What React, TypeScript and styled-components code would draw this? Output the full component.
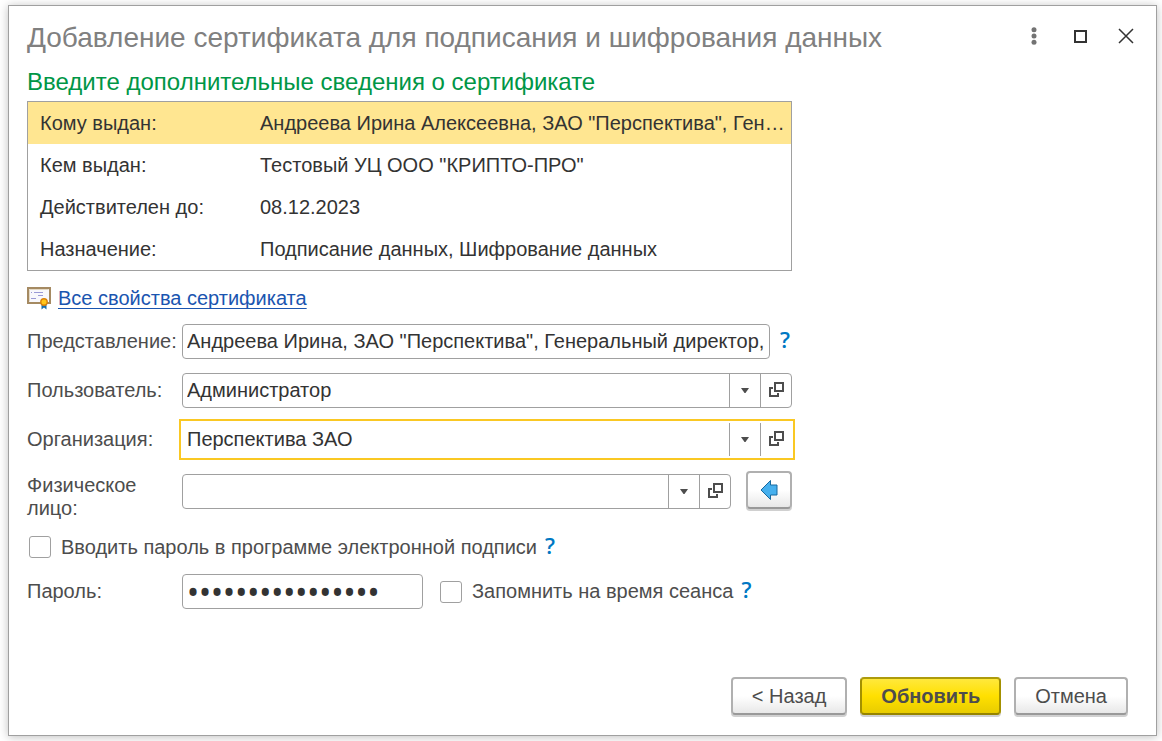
import React, { useState } from "react";
import styled, { createGlobalStyle, css } from "styled-components";

const GlobalStyle = createGlobalStyle`
  *, *::before, *::after { box-sizing: border-box; }
  body {
    margin: 0;
    background: #fff;
    color: #333;
    font-family: "Liberation Sans", Arial, sans-serif;
    font-size: 20px;
    line-height: 23px;
  }
  input, button { font: inherit; color: inherit; }
`;

const Page = styled.div`
  display: flex;
  min-height: 100vh;
  padding: 5px 5px 5px 8px;
`;

const Dialog = styled.main`
  flex: 1;
  display: flex;
  flex-direction: column;
  min-width: 0;
  padding: 14px 28px 20px 18px;
  border: 1px solid #a0a0a0;
  background: #fff;
  box-shadow: 0 1px 9px rgba(0, 0, 0, 0.25);
`;

const TitleBar = styled.header`
  display: flex;
  align-items: flex-start;
  justify-content: space-between;
  height: 36px;
`;

const Title = styled.h1`
  margin: 0;
  color: #808080;
  font-size: 28px;
  font-weight: 400;
  line-height: 36px;
`;

const WindowTools = styled.div`
  display: flex;
  gap: 22px;
  margin: 4px -10px 0 0;
`;

const ToolButton = styled.button`
  display: grid;
  place-items: center;
  width: 24px;
  height: 24px;
  padding: 0;
  border: 0;
  background: none;
`;

const Subtitle = styled.h2`
  margin: 12px 0 5px;
  color: #009646;
  font-size: 24px;
  font-weight: 400;
  line-height: 28px;
`;

const Form = styled.form`
  flex: 1;
  display: flex;
  flex-direction: column;
`;

const Content = styled.div`
  width: 100%;
  max-width: 765px;
`;

const Details = styled.table`
  width: 100%;
  table-layout: fixed;
  border: 1px solid #a0a0a0;
  border-spacing: 0;
`;

const DetailRow = styled.tr<{ $selected?: boolean }>`
  height: 42px;
  background: ${(p) => (p.$selected ? "#ffe691" : "#fff")};
`;

const DetailLabel = styled.th`
  width: 220px;
  padding: 0 0 0 12px;
  font-weight: 400;
  text-align: left;
`;

const DetailValue = styled.td`
  padding: 0 4px 0 12px;
  overflow: hidden;
  text-overflow: ellipsis;
  white-space: nowrap;
`;

const LinkRow = styled.div`
  display: flex;
  align-items: center;
  gap: 7px;
  margin: 15px 0 14px;
`;

const Link = styled.a`
  color: #1a55b0;
  text-decoration: underline;
  text-decoration-thickness: 1px;
  text-decoration-skip-ink: none;
  text-underline-offset: 3px;
`;

const Fields = styled.div`
  display: flex;
  flex-direction: column;
  gap: 14px;
`;

const FieldRow = styled.div<{ $top?: boolean }>`
  display: flex;
  align-items: ${(p) => (p.$top ? "flex-start" : "center")};
  padding-top: ${(p) => (p.$top ? "3px" : "0")};
`;

const FieldLabel = styled.label`
  flex: none;
  width: 155px;
  color: #4d4d4d;
`;

const Box = styled.div<{ $focused?: boolean; $width?: string }>`
  flex: ${(p) => (p.$width ? `0 1 ${p.$width}` : "1")};
  display: flex;
  min-width: 0;
  height: 35px;
  border: 1px solid #a0a0a0;
  border-radius: 4px;
  background: #fff;
  overflow: hidden;
  ${(p) =>
    p.$focused &&
    css`
      border-color: transparent;
      border-radius: 0;
      outline: 2px solid #fac823;
      outline-offset: 1px;
    `}
`;

const TextInput = styled.input`
  flex: 1;
  min-width: 0;
  padding: 0 4px;
  border: 0;
  outline: 0;
  background: none;
`;

const PasswordInput = styled(TextInput)`
  font-family: "Noto Sans", sans-serif;
  font-size: 32px;
`;

const InnerButton = styled.button`
  display: grid;
  place-items: center;
  flex: none;
  width: 31px;
  padding: 0;
  border: 0;
  border-left: 1px solid #a0a0a0;
  background: none;
`;

const Help = styled.button`
  flex: none;
  padding: 0 0 4px;
  border: 0;
  background: none;
  color: #0078c3;
  font-family: "Open Sans", sans-serif;
  font-size: 22px;
  font-weight: 600;
  line-height: 23px;
`;

const FieldHelp = styled(Help)`
  width: 22px;
  padding-left: 8px;
`;

const CheckLabel = styled.label`
  display: flex;
  align-items: center;
  gap: 10px;
  margin-right: 8px;
  color: #4d4d4d;
`;

const CheckBox = styled.input`
  appearance: none;
  width: 22px;
  height: 22px;
  margin: 0;
  border: 1px solid #a0a0a0;
  border-radius: 3px;
  background: #fff;
  &:checked { background: #ffe691; }
`;

const CheckRow = styled.div`
  display: flex;
  align-items: center;
  height: 26px;
  padding-left: 2px;
`;

const SessionCheck = styled(CheckLabel)`
  margin-left: 17px;
`;

const Button = styled.button<{ $primary?: boolean }>`
  height: 38px;
  padding: 0 19px;
  border: 2px solid;
  border-color: #b0b0b0 #b0b0b0 #999;
  border-radius: 4px;
  background: linear-gradient(#fff 50%, #e8e8e8);
  box-shadow: 0 2px 0 #d0d0d0;
  color: #4d4d4d;
  ${(p) =>
    p.$primary &&
    css`
      border-color: #ad9b0c #a39000 #958300;
      background: linear-gradient(#ffe83c, #ffe000 50%, #e8cc00);
      font-weight: 700;
    `}
`;

const PickButton = styled(Button)`
  display: grid;
  place-items: center;
  flex: none;
  width: 46px;
  padding: 0;
  margin: -3px 0 0 15px;
`;

const Footer = styled.footer`
  display: flex;
  justify-content: flex-end;
  gap: 13px;
  margin-top: auto;
  padding-top: 24px;
`;

const CertificateIcon = () => (
  <svg width="24" height="24" viewBox="0 0 24 24" aria-hidden="true">
    <rect x="1" y="2" width="22" height="15" fill="#f8f8fc" stroke="#a58a62" strokeWidth="2" />
    <path d="M2.500 15.500V3.500H21.500" fill="none" stroke="#e4d9c5" />
    <path d="M4 6.500h1M7 6.500h9M11 9.500h5M4 12.500h5" stroke="#9a9ad6" />
    <path d="M14.500 17h5v6.500l-2.500-2-2.500 2z" fill="#176eae" />
    <circle cx="17" cy="16" r="3.200" fill="#ffc61a" stroke="#da8208" strokeWidth="1.400" />
  </svg>
);

const ArrowDown = () => (
  <svg width="8" height="5" viewBox="0 0 8 5" aria-hidden="true">
    <path d="M0 0h8L4.500 5h-1z" fill="#4d4d4d" />
  </svg>
);

const OpenIcon = () => (
  <svg width="16" height="17" viewBox="0 0 16 17" fill="none" stroke="#4d4d4d" strokeWidth="2" aria-hidden="true">
    <rect x="7" y="1" width="8" height="8" />
    <path d="M5 6H2v8h8v-3" />
  </svg>
);

const BlueArrow = () => (
  <svg width="18" height="22" viewBox="0 0 18 22" aria-hidden="true">
    <path d="M1 11L10.500 1.500V6H17v10h-6.500v4.500z" fill="#46b0ee" stroke="#17699f" strokeLinejoin="round" />
  </svg>
);

const details = [
  ["Кому выдан:", 'Андреева Ирина Алексеевна, ЗАО "Перспектива", Генеральный директор'],
  ["Кем выдан:", 'Тестовый УЦ ООО "КРИПТО-ПРО"'],
  ["Действителен до:", "08.12.2023"],
  ["Назначение:", "Подписание данных, Шифрование данных"],
];

type ComboProps = { id: string; value: string; focused?: boolean };

function Combo({ id, value, focused }: ComboProps) {
  const [text, setText] = useState(value);
  return (
    <Box $focused={focused}>
      <TextInput id={id} value={text} onChange={(e) => setText(e.target.value)} />
      <InnerButton type="button" aria-label="Выбрать из списка"><ArrowDown /></InnerButton>
      <InnerButton type="button" aria-label="Открыть"><OpenIcon /></InnerButton>
    </Box>
  );
}

export default function App() {
  return (
    <Page>
      <GlobalStyle />
      <Dialog>
        <TitleBar>
          <Title>Добавление сертификата для подписания и шифрования данных</Title>
          <WindowTools>
            <ToolButton type="button" aria-label="Ещё">
              <svg width="6" height="18" viewBox="0 0 6 18" fill="#737373">
                <circle cx="3" cy="2.700" r="2.500" />
                <circle cx="3" cy="9" r="2.500" />
                <circle cx="3" cy="15.300" r="2.500" />
              </svg>
            </ToolButton>
            <ToolButton type="button" aria-label="Развернуть">
              <svg width="14" height="14" viewBox="0 0 14 14" fill="none" stroke="#333" strokeWidth="2">
                <rect x="2" y="2" width="11" height="11" />
              </svg>
            </ToolButton>
            <ToolButton type="button" aria-label="Закрыть">
              <svg width="16" height="16" viewBox="0 0 16 16" stroke="#333" strokeWidth="1.500">
                <path d="M1 1l14 14M15 1L1 15" />
              </svg>
            </ToolButton>
          </WindowTools>
        </TitleBar>
        <Subtitle>Введите дополнительные сведения о сертификате</Subtitle>
        <Form onSubmit={(e) => e.preventDefault()}>
          <Content>
            <Details>
              <tbody>
                {details.map(([label, value], i) => (
                  <DetailRow key={label} $selected={i === 0}>
                    <DetailLabel scope="row">{label}</DetailLabel>
                    <DetailValue>{value}</DetailValue>
                  </DetailRow>
                ))}
              </tbody>
            </Details>
            <LinkRow>
              <CertificateIcon />
              <Link href="#properties">Все свойства сертификата</Link>
            </LinkRow>
            <Fields>
              <FieldRow>
                <FieldLabel htmlFor="name">Представление:</FieldLabel>
                <Box>
                  <TextInput
                    id="name"
                    defaultValue={'Андреева Ирина, ЗАО "Перспектива", Генеральный директор, до 12.2023'}
                  />
                </Box>
                <FieldHelp type="button">?</FieldHelp>
              </FieldRow>
              <FieldRow>
                <FieldLabel htmlFor="user">Пользователь:</FieldLabel>
                <Combo id="user" value="Администратор" />
              </FieldRow>
              <FieldRow>
                <FieldLabel htmlFor="company">Организация:</FieldLabel>
                <Combo id="company" value="Перспектива ЗАО" focused />
              </FieldRow>
              <FieldRow $top>
                <FieldLabel htmlFor="person">Физическое лицо:</FieldLabel>
                <Combo id="person" value="" />
                <PickButton type="button" aria-label="Заполнить"><BlueArrow /></PickButton>
              </FieldRow>
              <CheckRow>
                <CheckLabel>
                  <CheckBox type="checkbox" />
                  Вводить пароль в программе электронной подписи
                </CheckLabel>
                <Help type="button">?</Help>
              </CheckRow>
              <FieldRow>
                <FieldLabel htmlFor="password">Пароль:</FieldLabel>
                <Box $width="241px">
                  <PasswordInput id="password" type="password" defaultValue="1234567890123456" />
                </Box>
                <SessionCheck>
                  <CheckBox type="checkbox" />
                  Запомнить на время сеанса
                </SessionCheck>
                <Help type="button">?</Help>
              </FieldRow>
            </Fields>
          </Content>
          <Footer>
            <Button type="button">&lt; Назад</Button>
            <Button type="submit" $primary>Обновить</Button>
            <Button type="button">Отмена</Button>
          </Footer>
        </Form>
      </Dialog>
    </Page>
  );
}
